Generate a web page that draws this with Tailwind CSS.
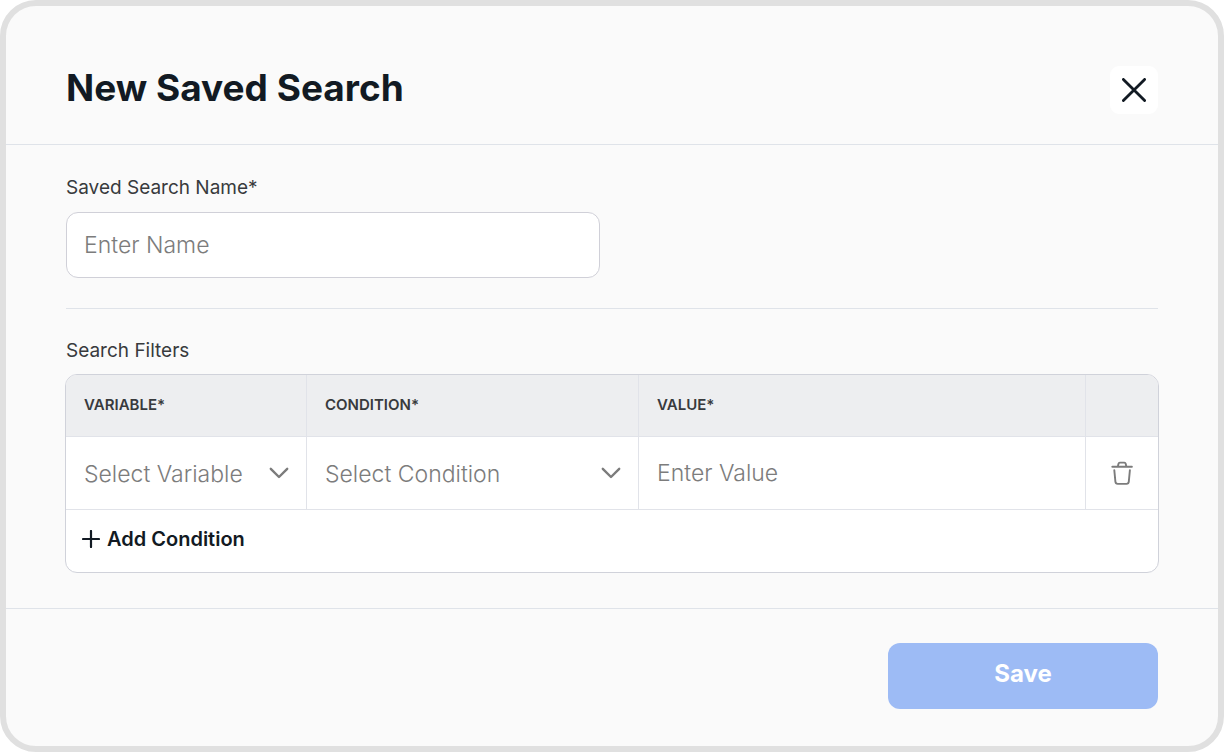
<!DOCTYPE html>
<html lang="en">
<head>
<meta charset="utf-8">
<meta name="viewport" content="width=device-width, initial-scale=1">
<title>New Saved Search</title>
<script src="https://cdn.jsdelivr.net/npm/@tailwindcss/browser@4"></script>
</head>
<body class="bg-white font-['Gilroy','Inter',sans-serif] text-[#383a3d]">
<form class="flex min-h-screen flex-col rounded-[36px] border-6 border-[#e0e0e0] bg-[#fafafa]">
  <header class="flex items-start justify-between border-b border-[#dfe3e9] px-[60px] pt-[60px] pb-[30px]">
    <h1 class="text-[37px] leading-11 font-bold text-[#121a23]">New Saved Search</h1>
    <button type="button" aria-label="Close" class="flex size-12 items-center justify-center rounded-[9px] bg-white text-[#121a23]">
      <svg class="size-6" viewBox="0 0 24 24" fill="none" stroke="currentColor" stroke-width="2.8" stroke-linecap="round" aria-hidden="true"><path d="M1.4 1.4 22.6 22.6M22.6 1.4 1.4 22.6"/></svg>
    </button>
  </header>

  <main class="grow px-[60px] pt-[31px] pb-[34px]">
    <div class="border-b border-[#dfe3e9] pb-[30px]">
      <label for="name" class="block text-[19px] leading-6">Saved Search Name*</label>
      <input id="name" type="text" placeholder="Enter Name" class="mt-3 block h-[66px] w-full max-w-[534px] rounded-xl border border-[#d0d0d8] bg-white px-[17px] font-['Inter',sans-serif] text-[23px] font-light text-[#383a3d] placeholder:text-[#7c7c7c]">
    </div>

    <section class="pt-[30px]" aria-labelledby="filters">
      <h2 id="filters" class="text-[19px] leading-6 font-normal">Search Filters</h2>
      <div class="-mx-px mt-[11px] overflow-hidden rounded-xl border border-[#d0d2da] bg-white">
        <table class="w-full table-fixed border-separate border-spacing-0 text-left">
          <thead class="bg-[#edeef0] text-[15px]">
            <tr class="h-[62px]">
              <th scope="col" class="w-[241px] border-r border-b border-[#e1e3e9] px-[18px] font-semibold">VARIABLE*</th>
              <th scope="col" class="w-[332px] border-r border-b border-[#e1e3e9] px-[18px] font-semibold">CONDITION*</th>
              <th scope="col" class="border-r border-b border-[#e1e3e9] px-[18px] font-semibold">VALUE*</th>
              <td class="w-[72px] border-b border-[#e1e3e9]"></td>
            </tr>
          </thead>
          <tbody class="font-['Inter',sans-serif] text-[23px] font-light text-[#7c7c7c]">
            <tr class="h-[73px]">
              <td class="border-r border-b border-[#e1e3e9] p-0">
                <div class="grid items-center">
                  <select aria-label="Variable" class="col-start-1 row-start-1 h-[72px] w-full appearance-none bg-transparent pt-0.5 pl-[18px]"><option>Select Variable</option></select>
                  <svg class="pointer-events-none col-start-1 row-start-1 mr-[17px] h-3 w-5 justify-self-end" viewBox="0 0 20 12" fill="none" stroke="currentColor" stroke-width="2.4" stroke-linecap="round" stroke-linejoin="round" aria-hidden="true"><path d="M1.8 1.8 10 10 18.2 1.8"/></svg>
                </div>
              </td>
              <td class="border-r border-b border-[#e1e3e9] p-0">
                <div class="grid items-center">
                  <select aria-label="Condition" class="col-start-1 row-start-1 h-[72px] w-full appearance-none bg-transparent pt-0.5 pl-[18px]"><option>Select Condition</option></select>
                  <svg class="pointer-events-none col-start-1 row-start-1 mr-[17px] h-3 w-5 justify-self-end" viewBox="0 0 20 12" fill="none" stroke="currentColor" stroke-width="2.4" stroke-linecap="round" stroke-linejoin="round" aria-hidden="true"><path d="M1.8 1.8 10 10 18.2 1.8"/></svg>
                </div>
              </td>
              <td class="border-r border-b border-[#e1e3e9] p-0">
                <input type="text" aria-label="Value" placeholder="Enter Value" class="block h-[72px] w-full px-[18px] placeholder:text-[#7c7c7c]">
              </td>
              <td class="border-b border-[#e1e3e9] p-0">
                <button type="button" aria-label="Delete condition" class="flex h-[72px] w-full items-center justify-center">
                  <svg class="size-6" viewBox="0 0 24 24" fill="none" stroke="currentColor" stroke-width="1.9" stroke-linecap="round" stroke-linejoin="round" aria-hidden="true"><path d="M2.3 5.7H21.9M7.9 5.2 8.5 2.7Q8.8 1.6 9.8 1.6H14.4Q15.4 1.6 15.7 2.7L16.3 5.2M4.3 9.1 5.4 20.7Q5.6 22.9 7.7 22.9H16.5Q18.6 22.9 18.8 20.7L19.9 9.1"/></svg>
                </button>
              </td>
            </tr>
          </tbody>
        </table>
        <button type="button" class="flex h-[62px] items-center gap-[7px] px-4 pb-1 text-xl font-semibold text-[#121a23]">
          <svg class="size-[18px]" viewBox="0 0 18 18" fill="none" stroke="currentColor" stroke-width="2.2" stroke-linecap="round" aria-hidden="true"><path d="M9 1V17M1 9H17"/></svg>
          Add Condition
        </button>
      </div>
    </section>
  </main>

  <footer class="flex justify-end border-t border-[#dfe3e9] px-[60px] pt-[34px] pb-[37px]">
    <button type="submit" class="h-[66px] w-[270px] rounded-xl bg-[#9dbbf5] pb-1 text-2xl font-bold text-white">Save</button>
  </footer>
</form>
</body>
</html>
